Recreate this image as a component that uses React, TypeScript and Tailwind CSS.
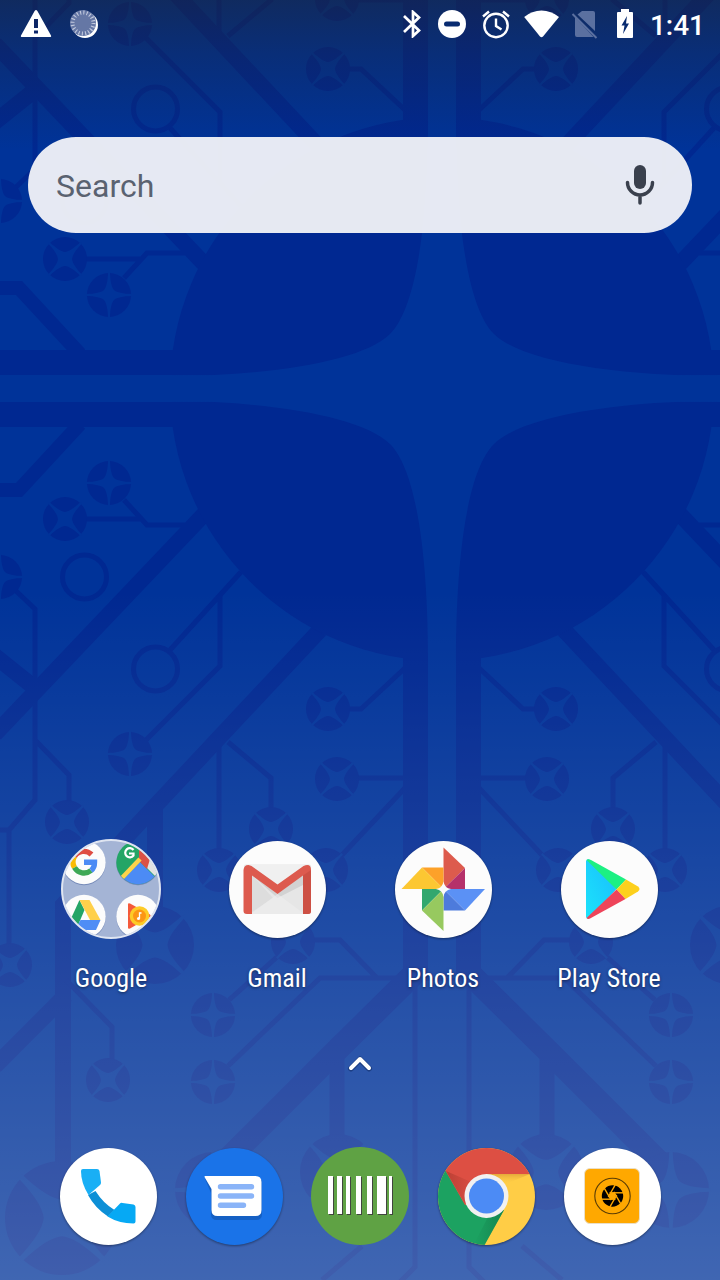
import type { ReactNode } from "react";

const BASE = "#003399";
const TRACE = "#002891";
const STAR =
  "M-23-1C-14-1.2-8-2.5-5-5C-2.5-8-1.2-14-1-23H1C1.2-14 2.5-8 5-5C8-2.5 14-1.2 23-1V1C14 1.2 8 2.5 5 5C2.5 8 1.2 14 1 23H-1C-1.2 14-2.5 8-5 5C-8 2.5-14 1.2-23 1Z";

type NodeSpec = { x: number; y: number; r?: number; turned?: boolean };

const nodes: NodeSpec[] = [
  { x: 109, y: 483 },
  { x: 65, y: 519, turned: true },
  { x: 0, y: 577 },
  { x: 130, y: 754 },
  { x: 328, y: 709, turned: true },
  { x: 337, y: 779, turned: true },
  { x: 67, y: 822, turned: true },
  { x: 271, y: 829, turned: true },
  { x: 219, y: 870, turned: true },
  { x: 326, y: 870, turned: true },
  { x: 10, y: 965, turned: true },
  { x: 293, y: 942, turned: true },
  { x: 155, y: 945, r: 39, turned: true },
  { x: 213, y: 1015 },
  { x: 213, y: 1082 },
  { x: 108, y: 1080, turned: true },
  { x: 62, y: 1218, r: 57, turned: true },
  { x: 213, y: 1190, r: 38 },
  { x: 338, y: 1172, r: 38, turned: true },
];

const thin =
  "M86 519H140M124 500L147 525H185M15 590L35 609V800L9 830V944M0 830H9M36 741L69 775V802M241 572L170 650M220 595V666L146 740M228 742L271 778V809M219 740V850M349 709H361L405 668M358 778H404M405 788L342 855M314 940H340L377 978M480 978H320L228 1066M229 1000L277 957M66 980L112 1027V1060M415 975V1267L400 1282M362 1246L322 1280";

function Quadrant() {
  return (
    <g>
      <g fill="none" stroke={TRACE}>
        <path strokeWidth="16" d="M210 508L-5 734M-5 656L35 688M320 630L142 820L63 905V1170M155 805V920M66 995L-5 1066" />
        <path strokeWidth="14" d="M0 490H19L80 424" />
        <path strokeWidth="23" d="M418 970L337 1050L222 1165" />
        <path strokeWidth="15" d="M337 1050V1140" />
        <path strokeWidth="5" d={thin} />
        <circle cx="84.5" cy="577" r="22" strokeWidth="5" />
        <circle cx="155.5" cy="669" r="22" strokeWidth="5" />
      </g>
      {nodes.map((n) => (
        <g key={`${n.x}-${n.y}`} transform={`translate(${n.x} ${n.y}) rotate(${n.turned ? 45 : 0}) scale(${(n.r ?? 22) / 22})`}>
          <circle r="22" fill={TRACE} />
          <path d={STAR} fill={BASE} />
        </g>
      ))}
    </g>
  );
}

function Wallpaper() {
  return (
    <svg aria-hidden="true" viewBox="0 0 720 1280" preserveAspectRatio="xMidYMid slice" className="absolute inset-0 h-full w-full">
      <defs>
        <linearGradient id="topShade" x1="0" y1="0" x2="0" y2="1">
          <stop offset="0" stopColor="#212121" stopOpacity=".48" />
          <stop offset=".35" stopColor="#212121" stopOpacity=".28" />
          <stop offset="1" stopColor="#212121" stopOpacity="0" />
        </linearGradient>
        <linearGradient id="bottomShade" x1="0" y1="0" x2="0" y2="1">
          <stop offset="0" stopColor="#fff" stopOpacity="0" />
          <stop offset="1" stopColor="#fff" stopOpacity=".25" />
        </linearGradient>
      </defs>
      <rect width="720" height="1280" fill={BASE} />
      <Quadrant />
      <g transform="translate(884 0) scale(-1 1)"><Quadrant /></g>
      <g transform="translate(0 778) scale(1 -1)"><Quadrant /></g>
      <g transform="translate(884 778) scale(-1 -1)"><Quadrant /></g>
      <circle cx="442" cy="389" r="272" fill={TRACE} />
      <path fill={TRACE} d="M403-20H428V978H403ZM456-20H481V978H456ZM0 350H720V375H0ZM0 402H720V427H0Z" />
      <path fill={BASE} d="M428-20H456V978H428ZM0 375H720V402H0Z" />
      <path
        fill={BASE}
        d="M170 376C265 376 362 362 390 334C418 306 428 214 428 120H456C456 214 466 306 494 334C522 362 619 376 720 376V401C619 401 522 416 494 444C466 472 456 564 456 660H428C428 564 418 472 390 444C362 416 265 401 170 401Z"
      />
      <rect width="720" height="150" fill="url(#topShade)" />
      <rect y="590" width="720" height="690" fill="url(#bottomShade)" />
    </svg>
  );
}

function StatusBar() {
  return (
    <header className="flex h-12 items-center justify-between pr-[15px] pl-5 text-white">
      <div className="flex items-center gap-[18px]">
        <svg viewBox="0 0 32 28" className="h-7 w-8" role="img" aria-label="Warning">
          <path fillRule="evenodd" fill="currentColor" d="M14.6 1Q16 -1 17.4 1L31 25.5Q31.5 27 30.5 27H1.5Q.5 27 1 25.5ZM14 9V18H18V9ZM14 20.5V23.5H18V20.5Z" />
        </svg>
        <svg viewBox="0 0 28 28" className="size-7" role="img" aria-label="Syncing">
          <circle cx="15" cy="15" r="13" fill="#fff" />
          <circle cx="13" cy="13" r="13" fill="#6577a5" />
          <circle cx="13" cy="13" r="10.5" fill="none" stroke="#c3cade" strokeWidth="4" strokeDasharray="1.1 2.2" />
        </svg>
      </div>
      <div className="flex items-center gap-4">
        <svg viewBox="0 0 20 28" className="h-7 w-5" fill="none" stroke="currentColor" strokeWidth="2.7" role="img" aria-label="Bluetooth">
          <path d="M2 6L17 20.5L11 26V2L17 7.5L2 22" />
        </svg>
        <svg viewBox="0 0 28 28" className="size-7" role="img" aria-label="Do not disturb">
          <circle cx="14" cy="14" r="14" fill="#fff" />
          <path d="M8.5 14H19.5" stroke="#082b70" strokeWidth="5" strokeLinecap="round" />
        </svg>
        <svg viewBox="0 0 28 28" className="size-7 overflow-visible" fill="none" stroke="currentColor" strokeWidth="2.4" role="img" aria-label="Alarm">
          <circle cx="14" cy="15.5" r="11.7" />
          <path d="M1 6.500L7 1.500M27 6.500L21 1.500M14 8.500V16L19.500 19.500" />
        </svg>
        <svg viewBox="0 0 32 28" className="h-7 w-8 overflow-visible" fill="currentColor" role="img" aria-label="Wi-Fi">
          <path d="M-1.800 7Q6 .5 15.500 .5T33 7L17 26.500Q15.500 28 14 26.500Z" />
        </svg>
        <svg viewBox="0 0 24 28" className="h-7 w-6 overflow-visible" role="img" aria-label="No SIM">
          <path d="M8 1H19Q21 1 21 3V21L3.500 4.500ZM1 7L19.500 27H3Q1 27 1 25Z" fill="#5b70a0" />
          <path d="M-1.500 4L22.500 28" stroke="#5b70a0" strokeWidth="2" />
        </svg>
        <svg viewBox="0 0 20 28" className="h-7 w-5 overflow-visible" role="img" aria-label="Battery charging">
          <path fill="#fff" d="M7 -1H15V2H18Q19 2 19 3V27Q19 28 18 28H4Q3 28 3 27V3Q3 2 4 2H7Z" />
          <path fill="#082b70" d="M13 6L7.500 15.500H10.500L9 24L15 13.500H12Z" />
        </svg>
        <time className="pt-1 text-[28px] leading-8 font-medium">1:41</time>
      </div>
    </header>
  );
}

function Disc({ fill = "#fcfcfc", children }: { fill?: string; children: ReactNode }) {
  return (
    <svg aria-hidden="true" viewBox="-1 -1 98 98" className="size-[98px] shrink-0 overflow-visible drop-shadow-[0_1px_1px_rgba(0,0,0,0.4)]">
      <circle cx="48.5" cy="48.5" r="48.5" fill={fill} />
      {children}
    </svg>
  );
}

function FolderIcon() {
  return (
    <svg aria-hidden="true" viewBox="0 0 100 100" className="size-[100px] shrink-0 overflow-visible">
      <defs>
        <clipPath id="folder"><circle cx="50" cy="50" r="48.5" /></clipPath>
        <clipPath id="maps"><circle cx="77" cy="23.5" r="21.7" /></clipPath>
      </defs>
      <circle cx="50" cy="50" r="49" fill="#a4b4d5" />
      <g clipPath="url(#folder)">
        <g fill="#3c5795" opacity=".45">
          <circle cx="23" cy="24.5" r="21.7" /><circle cx="77" cy="24.5" r="21.7" />
          <circle cx="23" cy="78.5" r="21.7" /><circle cx="77" cy="78.5" r="21.7" />
        </g>
        <g fill="#fcfcfc">
          <circle cx="23" cy="23.5" r="21.7" /><circle cx="23" cy="77.5" r="21.7" /><circle cx="77" cy="77.5" r="21.7" />
        </g>
        <g fill="none" strokeWidth="5.4">
          <path stroke="#df4d43" d="M13.5 17.5A11 11 0 0 1 30.5 15.5" />
          <path stroke="#fbbc05" d="M13.5 17.5A11 11 0 0 0 13.5 28.5" />
          <path stroke="#3ea856" d="M13.5 28.5A11 11 0 0 0 30 31.5" />
          <path stroke="#4c8bf5" d="M23 23.2H33.5Q33.5 29 30 31.5" />
        </g>
        <g clipPath="url(#maps)">
          <rect x="55" y="1" width="45" height="45" fill="#23a566" />
          <path d="M57 46L79 23L102 46V48H57Z" fill="#4c8bf5" />
          <path d="M79 22L101 44V0Z" fill="#e2e2e2" />
          <path d="M78 12V22L86 30L89 20L82 0Z" fill="#db5146" />
          <path d="M59 41L79 20" stroke="#fdd34c" strokeWidth="4.5" />
          <path d="M72.5 11A4.6 4.6 0 1 0 72.5 16.500V14.500H68" fill="none" stroke="#fff" strokeWidth="2.200" />
        </g>
        <path fill="#24a566" d="M18.5 61L23.5 71L15 91L8 84Z" />
        <path fill="#ffd04b" d="M18.5 61H28.5L39.5 81H29Z" />
        <path fill="#4f8df5" d="M19.5 81H39.5L35 91H14Z" />
        <path fill="#f4593a" d="M67 65.5Q67 63.5 69 64.5L89 75.5Q90.5 77 89 78L69 89.5Q67 90.5 67 88.5Z" />
        <circle cx="78.5" cy="77" r="9.8" fill="#fdcb27" />
        <circle cx="78.5" cy="77" r="6.5" fill="#fc9615" />
        <path d="M78.5 79.5V74H80.5" fill="none" stroke="#fff" strokeWidth="1.3" />
        <circle cx="77.5" cy="79.5" r="1.5" fill="#fff" />
      </g>
      <circle cx="50" cy="50" r="49" fill="none" stroke="#dfe5f1" strokeWidth="2" />
    </svg>
  );
}

function GmailIcon() {
  return (
    <Disc>
      <rect x="15" y="23.5" width="67" height="49.5" rx="2" fill="#e6e6e6" />
      <path fill="#f0f0f0" d="M20 24H77L48.5 45Z" />
      <path fill="#d2d2d2" d="M23 34L48.5 53L74 34V44L48.5 57Z" />
      <path fill="#ddd" d="M23 34L44 57L23 71Z" />
      <path fill="#efefef" d="M23 72L48.5 53L74 72V73H23Z" opacity=".6" />
      <path fill="#dd5a4e" d="M14.5 29Q15 24 19.5 24L22.5 25L48.5 43.5L74.5 25Q82 22 82 29V70Q82 73 79 73H74V34.5L48.5 53L23 34.5V73H18Q14.5 73 14.5 70Z" />
      <path fill="#c94d42" d="M74 34.5L82 29V70Q82 73 79 73H74Z" opacity=".8" />
    </Disc>
  );
}

function PhotosIcon() {
  return (
    <Disc>
      <path fill="#dd5b4d" d="M48.5 6.5L70 27L48.5 48Z" />
      <path fill="#b5316a" d="M70 27V48H48.5Z" />
      <path fill="#fda129" d="M27 26.5H48.5V48Z" />
      <path fill="#fcc732" d="M6.5 48L27 26.5L48.5 48Z" />
      <path fill="#5b91f5" d="M48.5 48H90L70 69.5Z" />
      <path fill="#4d7bdc" d="M48.5 48L70 69.5H48.5Z" />
      <path fill="#32a76e" d="M27 48H48.5L27 69.5Z" />
      <path fill="#97c95f" d="M48.5 48L27 69.5L48.5 90Z" />
      <path fill="#fafafa" d="M48.5 40.5Q49.5 47 56 48Q49.5 49 48.5 56Q47.5 49 41 48Q47.5 47 48.5 40.5Z" />
    </Disc>
  );
}

function PlayStoreIcon() {
  return (
    <Disc>
      <defs>
        <linearGradient id="playBlue" x1="1" y1="0" x2="0" y2="1">
          <stop offset="0" stopColor="#19bdfd" /><stop offset="1" stopColor="#1ce3fb" />
        </linearGradient>
      </defs>
      <path fill="url(#playBlue)" d="M25 20V76Q26 79 29 77L55.5 48L29 19Q26 17 25 20Z" />
      <path fill="#1cf083" d="M25.5 19Q27 17.5 30 19L65 38.5L55.5 48.5Z" />
      <path fill="#fdd01d" d="M65 38.5L77 45.5Q80 48 77 50.5L64.5 58L55.5 48.5Z" />
      <path fill="#ee445a" d="M25.5 77L55.5 48.5L64.5 58L29 77.5Q27 78.5 25.5 77Z" />
    </Disc>
  );
}

function PhoneIcon() {
  return (
    <Disc fill="#fff">
      <path fill="#0d8fd6" d="M28 47L35.5 43Q43 55 54.5 62L48 68.5Q35 60 28 47Z" />
      <path fill="#19aff5" d="M23 21H37Q39 21 39.5 23L41 34.5Q41 36 40 37L28.5 47Q21 35 21 23Q21 21 23 21Z" />
      <path fill="#06a9f4" d="M60 55.5Q61 54.5 62.5 55L73.5 56.5Q75.5 57 75.5 59V73.5Q75.5 75.5 73.5 75.5Q59 75.5 47.5 68.5Z" />
    </Disc>
  );
}

function MessagesIcon() {
  return (
    <Disc fill="#1a73e8">
      <path fill="#1560c4" d="M25 32H76V66Q76 72 70 72H31Q25 72 25 66V45L19 31Z" />
      <path fill="#fff" d="M19 28H69.5Q75.5 28 75.5 34V62Q75.5 68 69.5 68H31.5Q25.5 68 25.5 62V41L18.5 29Q18.5 28 19 28Z" />
      <path stroke="#8ab4f8" strokeWidth="5.4" strokeLinecap="round" d="M34.5 38.7H65.5M34.5 48H65.5M34.5 57.3H57.5" />
    </Disc>
  );
}

const BARS = "M17 29H22V67H17ZM26 29H31V67H26ZM35 29H39V67H35ZM45 29H50V67H45ZM56 29H61V67H56ZM66 29H75V67H66ZM78 29H81V67H78Z";

function BarcodeIcon() {
  return (
    <svg aria-hidden="true" viewBox="0 0 98 98" className="size-[98px] shrink-0">
      <circle cx="49" cy="49" r="49" fill="#5fa244" />
      <path transform="translate(1 1)" fill="#41453f" d={BARS} />
      <path fill="#fff" d={BARS} />
    </svg>
  );
}

function ChromeIcon() {
  return (
    <Disc fill="#ffcd46">
      <defs>
        <clipPath id="chrome"><circle cx="48.5" cy="48.5" r="48.5" /></clipPath>
        <linearGradient id="chromeYellow" x1="0" y1="0" x2="0" y2="1">
          <stop offset="0" stopColor="#d99a35" stopOpacity=".7" /><stop offset="1" stopColor="#ffcd46" stopOpacity="0" />
        </linearGradient>
        <linearGradient id="chromeGreen" x1="0" y1="0" x2="1" y2="0">
          <stop offset="0" stopColor="#137f4c" stopOpacity="0" /><stop offset="1" stopColor="#137f4c" stopOpacity=".8" />
        </linearGradient>
        <linearGradient id="chromeRed" x1="0" y1="0" x2="1" y2="0">
          <stop offset="0" stopColor="#a5372c" stopOpacity=".6" /><stop offset="1" stopColor="#a5372c" stopOpacity="0" />
        </linearGradient>
      </defs>
      <g clipPath="url(#chrome)">
        <path fill="url(#chromeYellow)" d="M48 26H92L68 36Z" />
        <path fill="#1ca261" d="M7 21L27 56L48 70L66 62L46 98H-5V10Z" />
        <path fill="url(#chromeGreen)" d="M66 62L46 98L36 96L50 69Z" />
        <path fill="#dd4f43" d="M7 22L27 57L48 48V26H98V-5H0Z" />
        <path fill="url(#chromeRed)" d="M8 23L27 56L38 36Z" />
      </g>
      <circle cx="48.5" cy="48" r="22" fill="#f1f1f1" />
      <circle cx="48.5" cy="48" r="17.5" fill="#4c8bf5" />
    </Disc>
  );
}

function CameraIcon() {
  return (
    <Disc fill="#fff">
      <rect x="20.5" y="20.5" width="55" height="55" rx="5.5" fill="#ffa800" stroke="#eadfc8" strokeWidth="1" />
      <circle cx="48.5" cy="48" r="17.7" fill="none" stroke="#5b3d05" strokeWidth="1.1" />
      <circle cx="48.5" cy="48" r="10.7" />
      <circle cx="48.5" cy="48" r="3.2" fill="#ffa800" />
      <g stroke="#ffa800" strokeWidth="1.4" transform="translate(48.5 48)">
        {[0, 60, 120, 180, 240, 300].map((a) => (
          <path key={a} transform={`rotate(${a})`} d="M-3 -3.2H11" />
        ))}
      </g>
    </Disc>
  );
}

const apps = [
  { name: "Google", icon: <FolderIcon /> },
  { name: "Gmail", icon: <GmailIcon /> },
  { name: "Photos", icon: <PhotosIcon /> },
  { name: "Play Store", icon: <PlayStoreIcon /> },
];

const dock = [
  { name: "Phone", icon: <PhoneIcon /> },
  { name: "Messages", icon: <MessagesIcon /> },
  { name: "Barcode scanner", icon: <BarcodeIcon /> },
  { name: "Chrome", icon: <ChromeIcon /> },
  { name: "Camera", icon: <CameraIcon /> },
];

export default function App() {
  return (
    <div className="relative min-h-screen overflow-hidden bg-[#003399] font-['Roboto',sans-serif]">
      <Wallpaper />
      <div className="relative flex min-h-screen flex-col">
        <StatusBar />
        <main className="flex flex-1 flex-col">
          <form role="search" className="mx-7 mt-[89px] flex h-24 items-center rounded-full bg-[#f2f3f8]/95 pr-8 pl-7" onSubmit={(e) => e.preventDefault()}>
            <input
              type="text"
              aria-label="Search"
              placeholder="Search"
              className="min-w-0 flex-1 bg-transparent pt-0.5 text-[32px] leading-10 text-[#5a6270] outline-none placeholder:text-[#5a6270] placeholder:opacity-100"
            />
            <button type="button" aria-label="Voice search" className="text-[#3a404d]">
              <svg viewBox="0 0 40 48" className="h-12 w-10" fill="none" stroke="currentColor" strokeLinecap="round">
                <path strokeWidth="12" d="M20 10V22" />
                <path strokeWidth="3.5" d="M7.500 21.500A12.500 12.500 0 0 0 32.500 21.500M20 35V42" strokeLinejoin="round" />
              </svg>
            </button>
          </form>
          <div className="flex-1" />
          <div className="grid grid-cols-4 px-7">
            {apps.map((app) => (
              <button key={app.name} type="button" className="flex flex-col items-center gap-[25px]">
                <span className="flex h-[100px] items-center">{app.icon}</span>
                <span className="font-['Roboto_Condensed','Roboto',sans-serif] text-[26px] leading-7 whitespace-nowrap text-white [text-shadow:0_1px_3px_rgba(0,0,0,0.5)]">
                  {app.name}
                </span>
              </button>
            ))}
          </div>
          <button type="button" aria-label="All apps" className="mt-12 flex h-12 items-center justify-center">
            <svg viewBox="0 0 28 20" className="h-5 w-7" fill="none" strokeLinecap="round" strokeLinejoin="round">
              <path stroke="#1d3f85" strokeWidth="6" d="M5 14.5L14 5.5L23 14.5" />
              <path stroke="#fff" strokeWidth="4" d="M5 14L14 5L23 14" />
            </svg>
          </button>
        </main>
        <nav aria-label="Dock" className="mt-[59px] grid grid-cols-5 px-[45px] pb-[35px]">
          {dock.map((app) => (
            <button key={app.name} type="button" aria-label={app.name} className="flex justify-center">
              {app.icon}
            </button>
          ))}
        </nav>
      </div>
    </div>
  );
}
